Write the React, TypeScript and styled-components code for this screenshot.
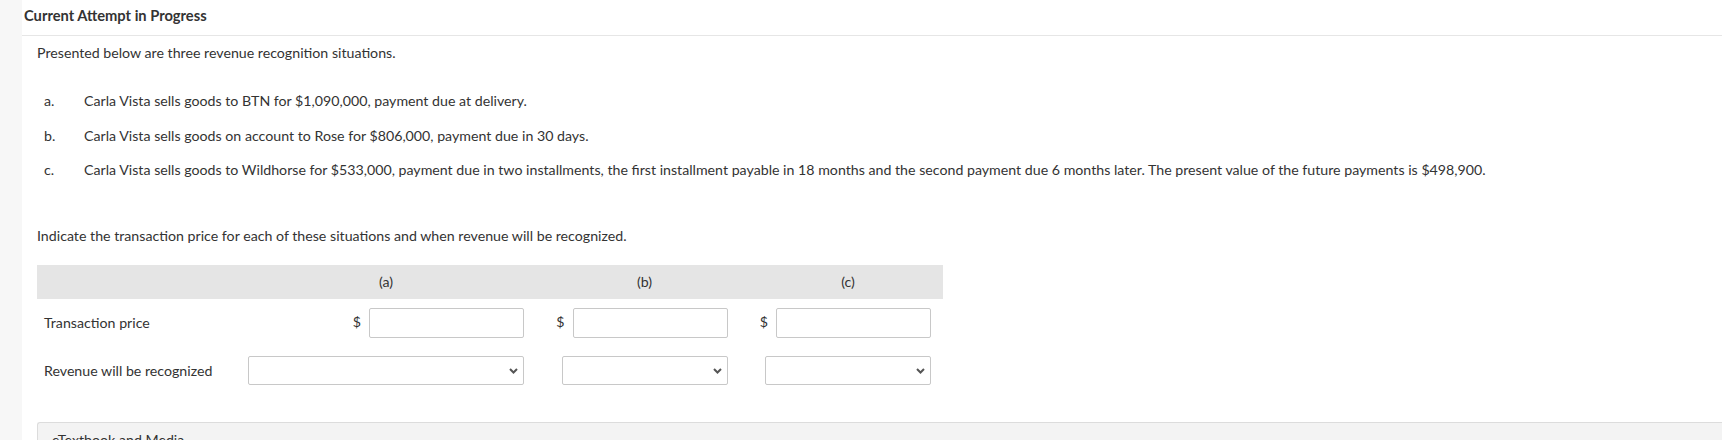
import React from "react";
import styled, { createGlobalStyle } from "styled-components";

const GlobalStyle = createGlobalStyle`
  html, body {
    margin: 0;
    padding: 0;
    background: #ffffff;
  }
  body {
    font-family: Lato, "Noto Sans", "Liberation Sans", sans-serif;
    font-size: 14.2px;
    color: #333333;
  }
  * { box-sizing: border-box; }
`;

const Page = styled.div`
  display: flex;
  min-height: 440px;
  width: 100%;
  overflow: hidden;
`;

const SideStrip = styled.div`
  width: 22px;
  flex: 0 0 22px;
  background: #f7f7f7;
`;

const Main = styled.div`
  flex: 1;
  min-width: 0;
`;

const TitleBar = styled.div`
  height: 36px;
  padding: 5px 0 0 2px;
  border-bottom: 1px solid #e6e6e6;
`;

const Title = styled.h1`
  margin: 0;
  font-size: 14.7px;
  line-height: 20px;
  font-weight: 700;
  color: #333333;
`;

const Content = styled.div`
  padding: 7px 0 0 15px;
`;

const Paragraph = styled.p<{ $mt?: number }>`
  margin: ${(p) => p.$mt ?? 0}px 0 0 0;
  font-size: 14.2px;
  line-height: 20px;
`;

const List = styled.div`
  margin-top: 28px;
  display: flex;
  flex-direction: column;
  gap: 14.5px;
`;

const Item = styled.div`
  display: grid;
  grid-template-columns: 40px 1fr;
  padding-left: 7px;
  font-size: 14.2px;
  line-height: 20px;
`;

const Table = styled.div`
  margin-top: 19px;
  width: 906px;
  display: flex;
  flex-direction: column;
`;

const Row = styled.div<{ $header?: boolean; $mt?: number }>`
  display: grid;
  grid-template-columns: 173.5px 276px 166px 166px;
  column-gap: 37.5px;
  padding-right: 12px;
  align-items: center;
  background: ${(p) => (p.$header ? "#e5e5e5" : "transparent")};
  height: ${(p) => (p.$header ? "34px" : "auto")};
  margin-top: ${(p) => p.$mt ?? 0}px;
`;

const HeadCell = styled.div`
  text-align: center;
  font-size: 14.2px;
  line-height: 20px;
`;

const Label = styled.div`
  padding-left: 7px;
  font-size: 14.2px;
  line-height: 20px;
  white-space: nowrap;
`;

const PriceCell = styled.div`
  display: flex;
  justify-content: flex-end;
  align-items: center;
  gap: 8px;
`;

const Dollar = styled.span`
  font-size: 14.2px;
  line-height: 20px;
  margin-top: -3px;
`;

const TextInput = styled.input`
  width: 155px;
  height: 30px;
  border: 1px solid #c8c8c8;
  border-radius: 2px;
  background: #ffffff;
  font-family: inherit;
  font-size: 14px;
  padding: 0 6px;
  outline: none;
`;

const SelectWrap = styled.div`
  position: relative;
  width: 100%;
`;

const Select = styled.select`
  display: block;
  width: 100%;
  height: 29px;
  border: 1px solid #c8c8c8;
  border-radius: 2px;
  background: #ffffff;
  appearance: none;
  -webkit-appearance: none;
  font-family: inherit;
  font-size: 14px;
  padding: 0 24px 0 6px;
  outline: none;
  color: #333333;
`;

const Chevron = styled.svg`
  position: absolute;
  right: 6px;
  top: 50%;
  transform: translateY(-50%);
  width: 9px;
  height: 6px;
  pointer-events: none;
`;

const MediaBox = styled.div`
  margin-top: 37px;
  border: 1px solid #dcdcdc;
  border-right: none;
  border-radius: 3px 0 0 0;
  background: #f3f3f3;
  height: 60px;
  padding: 7px 0 0 14px;
  font-size: 14.2px;
  line-height: 20px;
  color: #333333;
`;

const items = [
  { k: "a.", t: "Carla Vista sells goods to BTN for $1,090,000, payment due at delivery." },
  { k: "b.", t: "Carla Vista sells goods on account to Rose for $806,000, payment due in 30 days." },
  {
    k: "c.",
    t: "Carla Vista sells goods to Wildhorse for $533,000, payment due in two installments, the first installment payable in 18 months and the second payment due 6 months later. The present value of the future payments is $498,900.",
  },
];

const cols = ["(a)", "(b)", "(c)"];

function DropDown() {
  return (
    <SelectWrap>
      <Select defaultValue="">
        <option value=""></option>
      </Select>
      <Chevron viewBox="0 0 9 6">
        <path d="M1 1 L4.5 4.5 L8 1" fill="none" stroke="#555555" strokeWidth="2" />
      </Chevron>
    </SelectWrap>
  );
}

export default function App() {
  return (
    <>
      <GlobalStyle />
      <Page>
        <SideStrip />
        <Main>
          <TitleBar>
            <Title>Current Attempt in Progress</Title>
          </TitleBar>
          <Content>
            <Paragraph>Presented below are three revenue recognition situations.</Paragraph>
            <List>
              {items.map((it) => (
                <Item key={it.k}>
                  <span>{it.k}</span>
                  <span>{it.t}</span>
                </Item>
              ))}
            </List>
            <Paragraph $mt={46}>
              Indicate the transaction price for each of these situations and when revenue will be recognized.
            </Paragraph>
            <Table>
              <Row $header>
                <div />
                {cols.map((c) => (
                  <HeadCell key={c}>{c}</HeadCell>
                ))}
              </Row>
              <Row $mt={9}>
                <Label>Transaction price</Label>
                {cols.map((c) => (
                  <PriceCell key={c}>
                    <Dollar>$</Dollar>
                    <TextInput type="text" />
                  </PriceCell>
                ))}
              </Row>
              <Row $mt={18}>
                <Label>Revenue will be recognized</Label>
                {cols.map((c) => (
                  <DropDown key={c} />
                ))}
              </Row>
            </Table>
            <MediaBox>eTextbook and Media</MediaBox>
          </Content>
        </Main>
      </Page>
    </>
  );
}
